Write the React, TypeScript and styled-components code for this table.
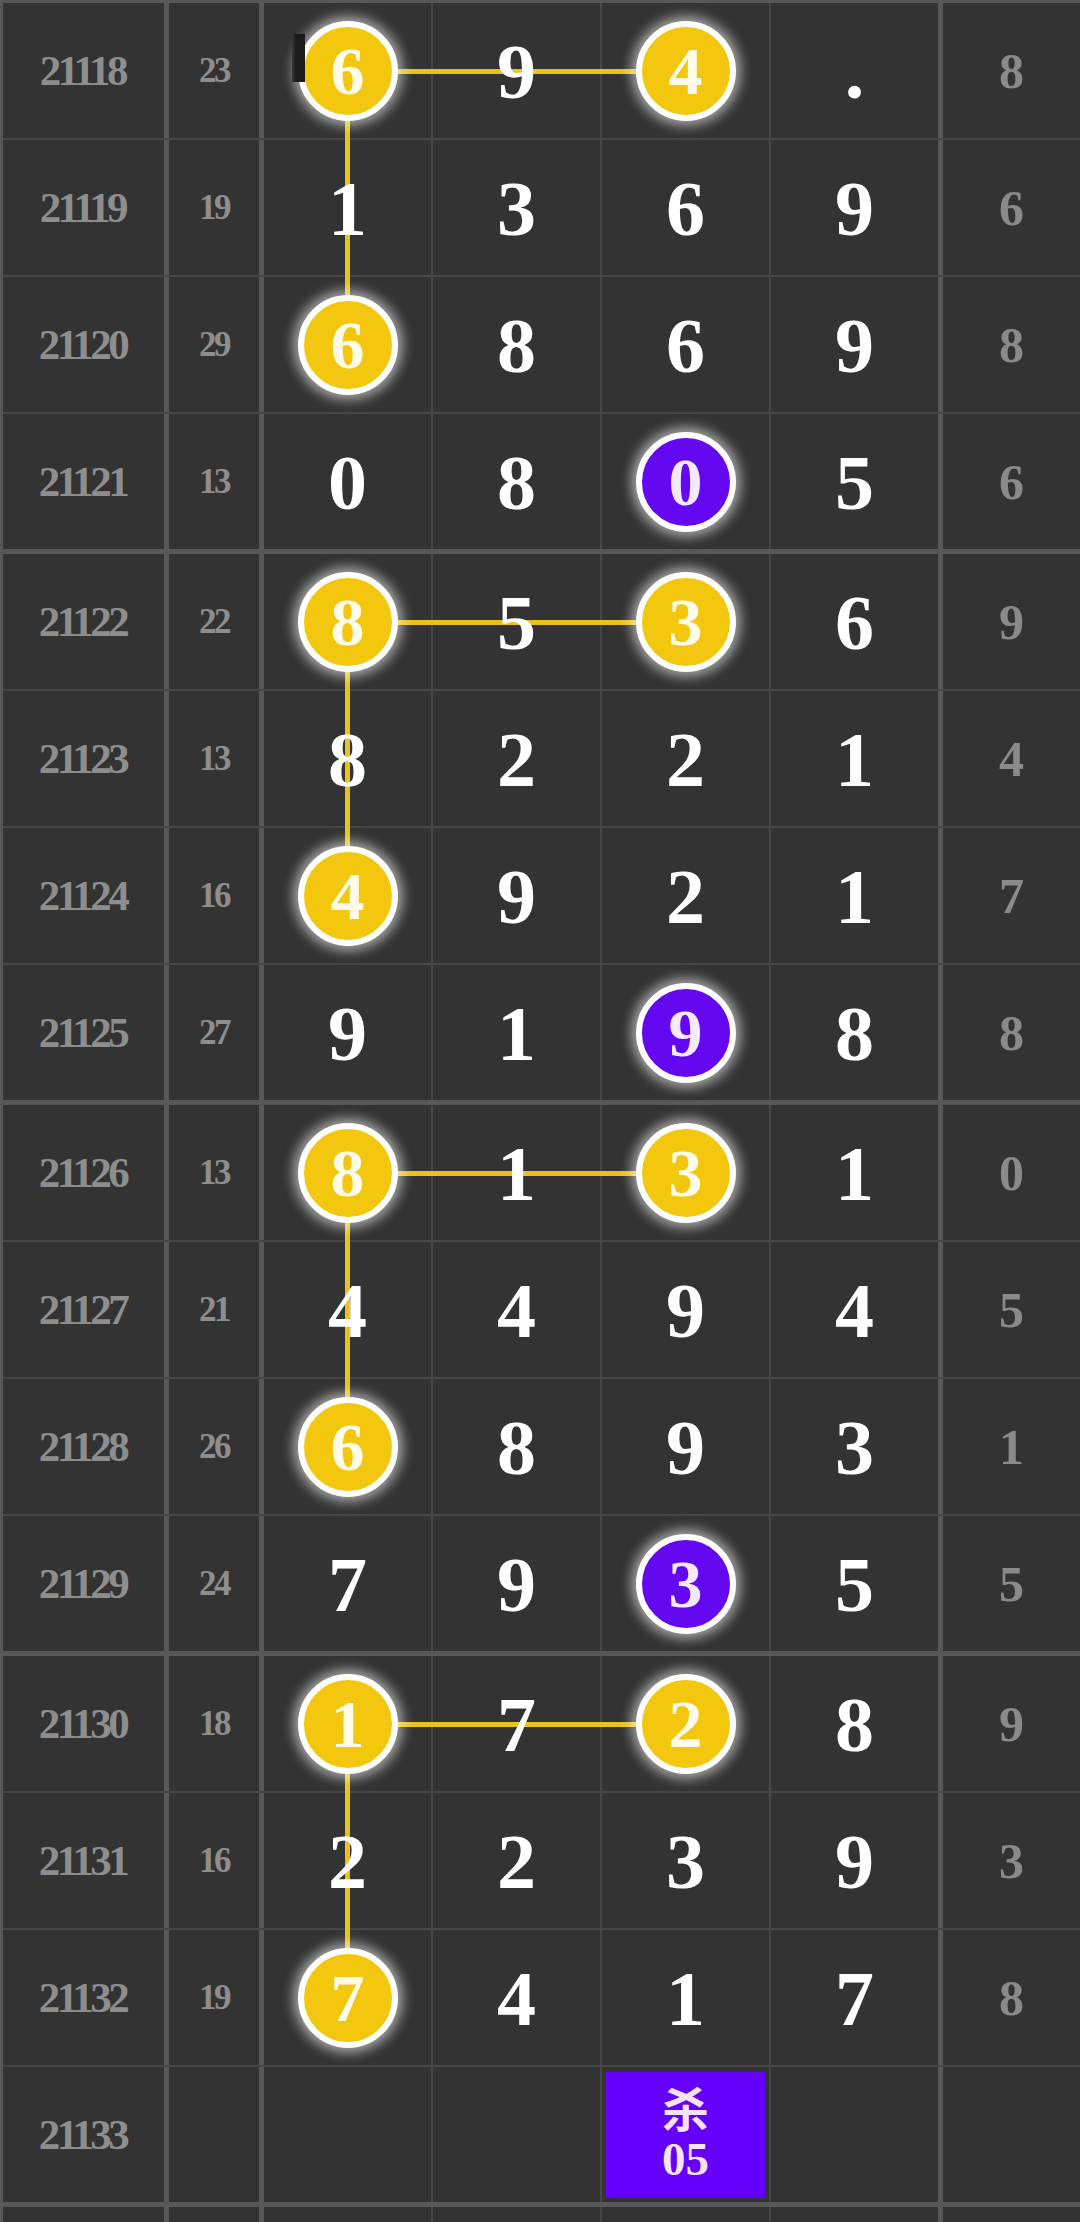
import React from 'react';
import styled, { createGlobalStyle, css } from 'styled-components';

const Global = createGlobalStyle`
  html, body { margin: 0; padding: 0; background: #333333; }
  body { overflow: hidden; }
`;

const THICK = '#585858';
const THIN = '#474747';
const LINE = '#e9c21b';

const Table = styled.div`
  width: 1080px;
  height: 2222px;
  overflow: hidden;
  box-sizing: border-box;
  background: #333333;
  border-left: 3px solid ${THICK};
  border-top: 3px solid ${THICK};
  font-family: "Liberation Serif", "Times New Roman", serif;
  font-weight: 700;
`;

const Group = styled.div`
  border-bottom: 5px solid ${THICK};
`;

const Row = styled.div<{ $last: boolean }>`
  display: flex;
  height: 135px;
  border-bottom: ${(p) => (p.$last ? 'none' : `2px solid ${THIN}`)};
`;

const BaseCell = styled.div`
  display: flex;
  align-items: center;
  justify-content: center;
  flex: none;
`;

const PeriodCell = styled(BaseCell)`
  width: 159px;
  border-right: 5px solid ${THICK};
  color: #8e8e8e;
  font-size: 43px;
  letter-spacing: -3.5px;
  padding-right: 2px;
`;

const SumCell = styled(BaseCell)`
  width: 90px;
  border-right: 5px solid ${THICK};
  color: #8e8e8e;
  font-size: 35px;
  letter-spacing: -2.5px;
`;

const DigitCell = styled(BaseCell)<{ $thick: boolean; $right: boolean; $down: boolean }>`
  width: 167px;
  border-right: ${(p) => (p.$thick ? `5px solid ${THICK}` : `2px solid ${THIN}`)};
  position: ${(p) => (p.$right || p.$down ? 'relative' : 'static')};
  color: #ffffff;
  font-size: 78px;
  ${(p) =>
    p.$right &&
    css`
      &::after {
        content: '';
        position: absolute;
        left: 50%;
        top: calc(50% - 2px);
        width: 338px;
        height: 5px;
        background: ${LINE};
        z-index: 1;
      }
    `}
  ${(p) =>
    p.$down &&
    css`
      &::before {
        content: '';
        position: absolute;
        left: calc(50% - 3px);
        top: 50%;
        width: 5px;
        height: 274px;
        background: ${LINE};
        z-index: 1;
      }
    `}
`;

const LastCell = styled(BaseCell)`
  flex: 1;
  color: #8a8a8a;
  font-size: 50px;
`;

const Plain = styled.span`
  position: relative;
  z-index: 2;
  line-height: 1;
  padding-top: 2px;
`;

const Ball = styled.span<{ $kind: 'y' | 'p' }>`
  position: relative;
  z-index: 2;
  width: 88px;
  height: 88px;
  border-radius: 50%;
  border: 6px solid #ffffff;
  background: ${(p) => (p.$kind === 'y' ? '#f2c70e' : '#6508f2')};
  color: ${(p) => (p.$kind === 'y' ? '#fffbea' : '#f3eaff')};
  box-shadow: 0 0 12px 5px rgba(255, 255, 255, 0.55);
  display: flex;
  align-items: center;
  justify-content: center;
  font-size: 68px;
  line-height: 1;
  box-sizing: content-box;
`;

const Smudge = styled.span`
  position: absolute;
  left: 28px;
  top: 31px;
  width: 13px;
  height: 48px;
  background: linear-gradient(90deg, #3a3a3a 0%, #1c1c1c 30%, #1c1c1c 100%);
  z-index: 3;
`;

const KillBox = styled.div`
  width: 159px;
  height: 126px;
  background: #6400fb;
  color: #f6e4f6;
  display: flex;
  align-items: center;
  justify-content: center;
`;

const KillText = styled.span`
  font-family: "Liberation Serif", "Noto Sans CJK SC", serif;
  font-size: 47px;
  font-weight: 700;
  line-height: 48px;
  white-space: pre-line;
  text-align: center;
`;

type D = { v: string; k?: 'y' | 'p'; r?: boolean; d?: boolean; smudge?: boolean };
type R = { id: string; sum: string; digits: D[]; last: string; kill?: boolean };

const y = (v: string, r = false, d = false, smudge = false): D => ({ v, k: 'y', r, d, smudge });
const p = (v: string): D => ({ v, k: 'p' });
const n = (v: string): D => ({ v });

const rows: R[] = [
  { id: '21118', sum: '23', digits: [y('6', true, true, true), n('9'), y('4'), n('.')], last: '8' },
  { id: '21119', sum: '19', digits: [n('1'), n('3'), n('6'), n('9')], last: '6' },
  { id: '21120', sum: '29', digits: [y('6'), n('8'), n('6'), n('9')], last: '8' },
  { id: '21121', sum: '13', digits: [n('0'), n('8'), p('0'), n('5')], last: '6' },
  { id: '21122', sum: '22', digits: [y('8', true, true), n('5'), y('3'), n('6')], last: '9' },
  { id: '21123', sum: '13', digits: [n('8'), n('2'), n('2'), n('1')], last: '4' },
  { id: '21124', sum: '16', digits: [y('4'), n('9'), n('2'), n('1')], last: '7' },
  { id: '21125', sum: '27', digits: [n('9'), n('1'), p('9'), n('8')], last: '8' },
  { id: '21126', sum: '13', digits: [y('8', true, true), n('1'), y('3'), n('1')], last: '0' },
  { id: '21127', sum: '21', digits: [n('4'), n('4'), n('9'), n('4')], last: '5' },
  { id: '21128', sum: '26', digits: [y('6'), n('8'), n('9'), n('3')], last: '1' },
  { id: '21129', sum: '24', digits: [n('7'), n('9'), p('3'), n('5')], last: '5' },
  { id: '21130', sum: '18', digits: [y('1', true, true), n('7'), y('2'), n('8')], last: '9' },
  { id: '21131', sum: '16', digits: [n('2'), n('2'), n('3'), n('9')], last: '3' },
  { id: '21132', sum: '19', digits: [y('7'), n('4'), n('1'), n('7')], last: '8' },
  { id: '21133', sum: '', digits: [n(''), n(''), n(''), n('')], last: '', kill: true },
  { id: '', sum: '', digits: [n(''), n(''), n(''), n('')], last: '' },
];

const groups: R[][] = [];
for (let i = 0; i < rows.length; i += 4) groups.push(rows.slice(i, i + 4));

export default function App() {
  return (
    <>
      <Global />
      <Table>
        {groups.map((g, gi) => (
          <Group key={gi}>
            {g.map((r, ri) => (
              <Row key={ri} $last={ri === 3}>
                <PeriodCell>{r.id}</PeriodCell>
                <SumCell>{r.sum}</SumCell>
                {r.digits.map((d, di) => (
                  <DigitCell key={di} $thick={di === 3} $right={!!d.r} $down={!!d.d}>
                    {r.kill && di === 2 ? (
                      <KillBox>
                        <KillText>{'杀\n05'}</KillText>
                      </KillBox>
                    ) : d.k ? (
                      <Ball $kind={d.k}>{d.v}</Ball>
                    ) : (
                      <Plain>{d.v}</Plain>
                    )}
                    {d.smudge && <Smudge />}
                  </DigitCell>
                ))}
                <LastCell>{r.last}</LastCell>
              </Row>
            ))}
          </Group>
        ))}
      </Table>
    </>
  );
}
